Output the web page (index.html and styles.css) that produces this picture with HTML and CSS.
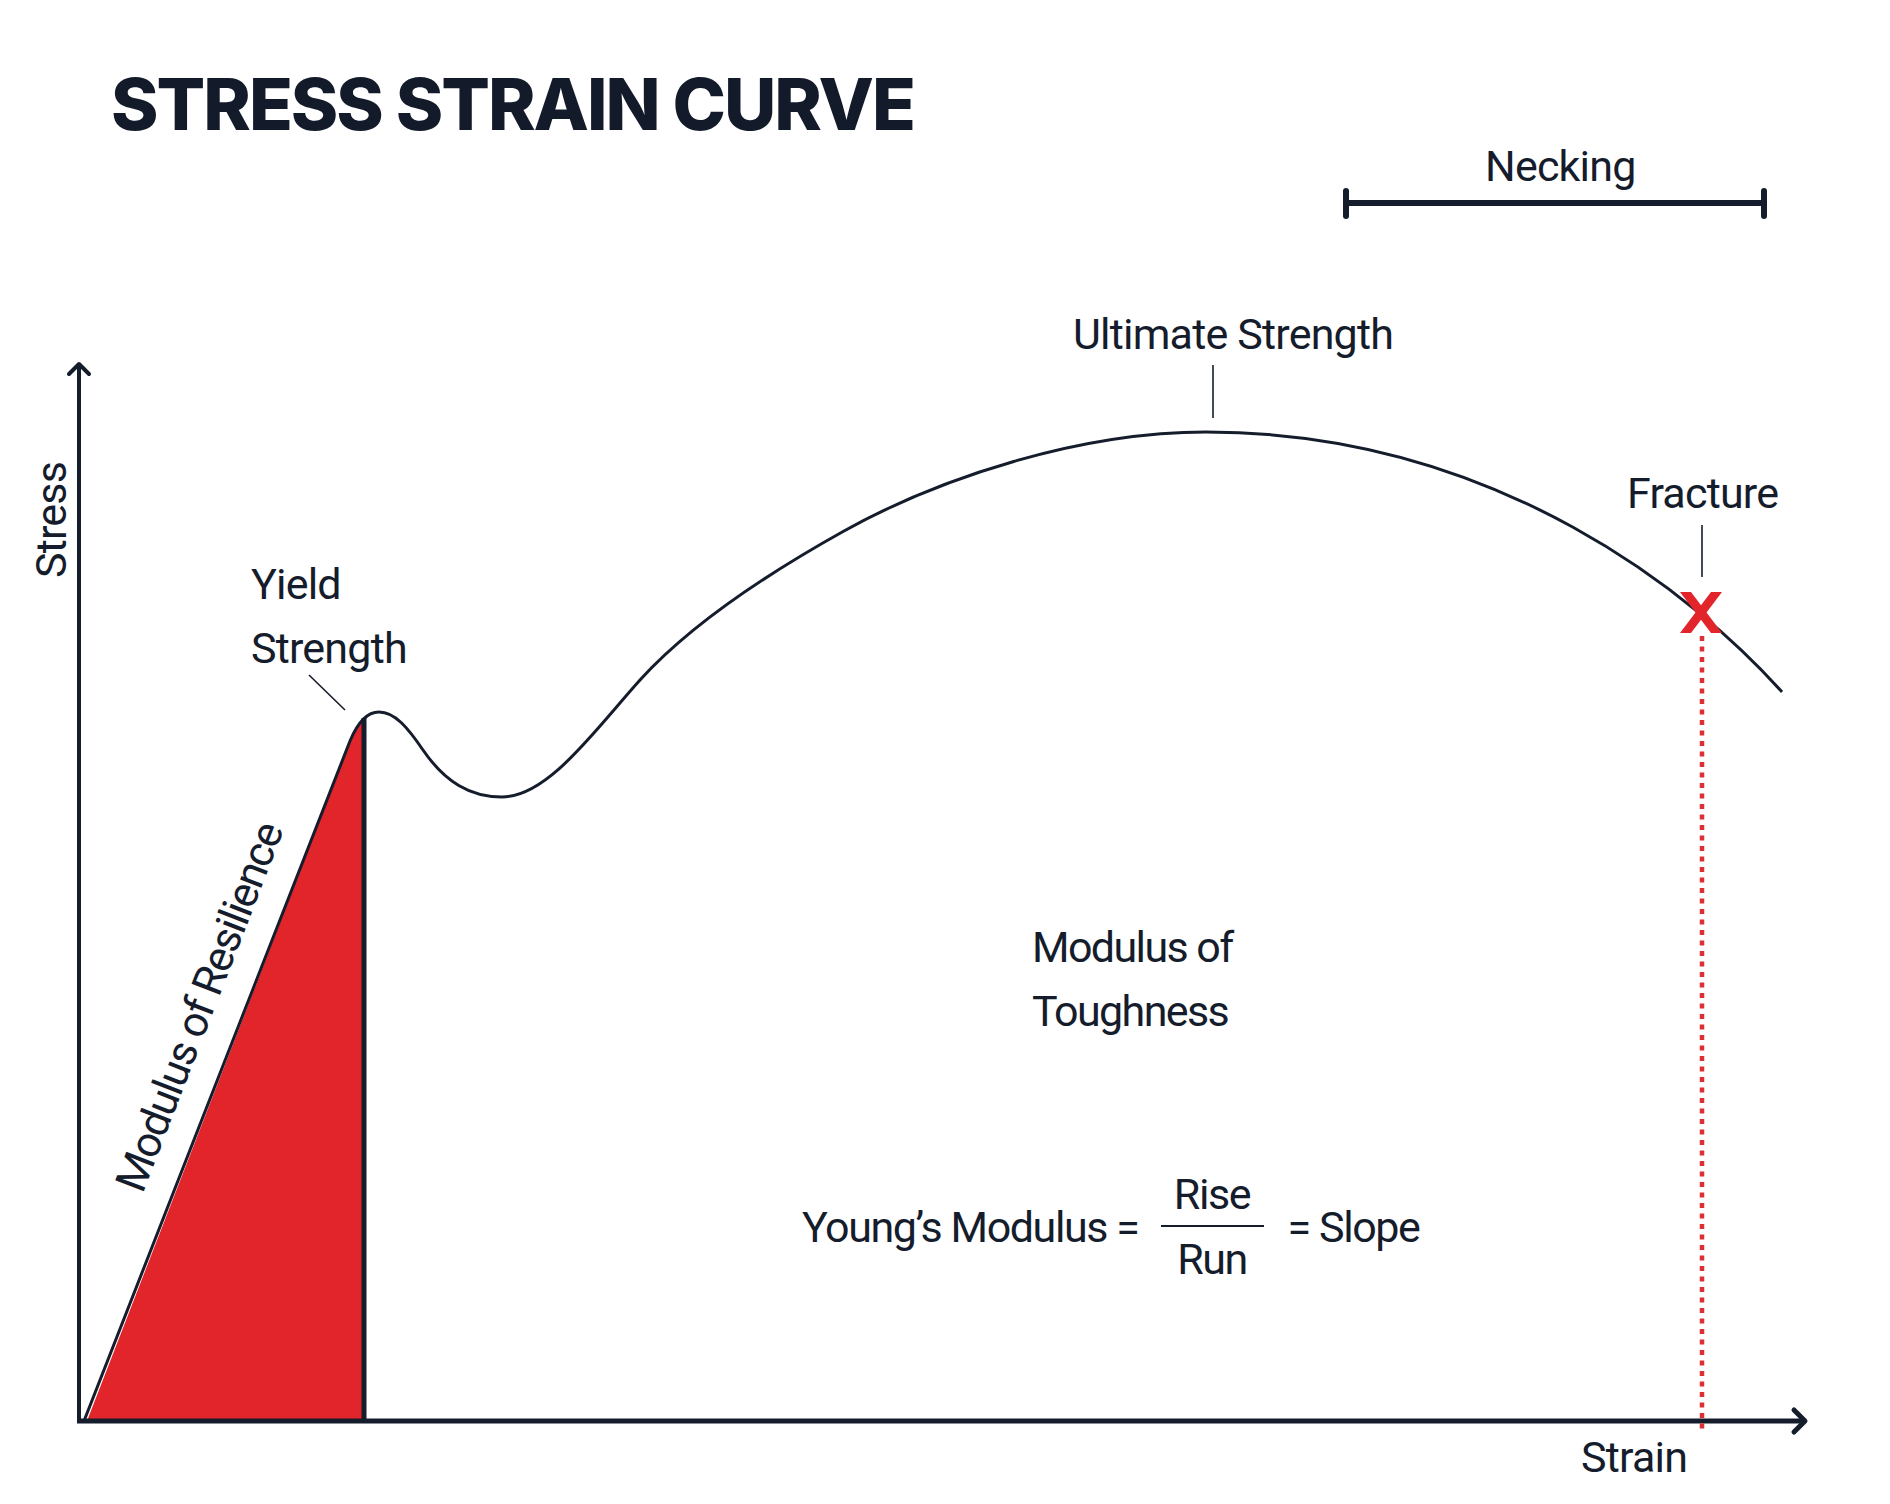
FILE: index.html
```html
<!DOCTYPE html>
<html lang="en">
<head>
<meta charset="utf-8">
<title>Stress Strain Curve</title>
<link rel="stylesheet" href="styles.css">
</head>
<body>
<header class="page-head">
  <h1 class="title">STRESS STRAIN CURVE</h1>
</header>
<main class="chart">
  <svg class="plot" width="1890" height="1364" viewBox="0 140 1890 1364" aria-hidden="true">
    <!-- necking bar -->
    <g class="ink-thick">
      <line x1="1346" y1="203" x2="1764" y2="203" stroke-width="6"/>
      <line x1="1346" y1="191" x2="1346" y2="216" stroke-width="6" stroke-linecap="round"/>
      <line x1="1764" y1="191" x2="1764" y2="216" stroke-width="6" stroke-linecap="round"/>
    </g>
    <!-- resilience area -->
    <path class="red-fill" d="M87 1421 L352 737 Q358 724 364 718 L364 1421 Z"/>
    <!-- axes -->
    <g class="ink-axis">
      <line x1="79" y1="364" x2="79" y2="1423" stroke-width="4"/>
      <polyline points="69,374 79,364 89,374" stroke-width="4"/>
      <line x1="77" y1="1421" x2="1805" y2="1421" stroke-width="5"/>
      <polyline points="1794,1410 1805,1421 1794,1432" stroke-width="5"/>
      <line x1="364" y1="718" x2="364" y2="1421" stroke-width="5"/>
    </g>
    <!-- curve -->
    <path class="curve" d="M84 1421 L350 741 C357 724 367 712 379 712 C395 712 408 728 423 750 C445 782 470 797 502 797 C548 797 595 730 640 680 C690 625 765 575 844 531 C940 477.5 1080 432 1206 432 C1500 432 1700 600 1782 692"/>
    <!-- leader lines -->
    <g class="leader">
      <line x1="309" y1="675" x2="345" y2="710"/>
      <line x1="1213" y1="365" x2="1213" y2="418"/>
      <line x1="1702" y1="525" x2="1702" y2="577"/>
    </g>
    <!-- fracture -->
    <line class="dots" x1="1702" y1="636" x2="1702" y2="1430"/>
    <g class="red-fill">
      <polygon points="1680,592 1691,592 1722,633 1711,633"/>
      <polygon points="1711,592 1722,592 1691,633 1680,633"/>
    </g>
  </svg>

  <div class="label necking">Necking</div>
  <div class="label ultimate">Ultimate Strength</div>
  <div class="label fracture">Fracture</div>
  <div class="label two-line yield">Yield<br>Strength</div>
  <div class="label two-line toughness">Modulus of<br>Toughness</div>
  <div class="label strain">Strain</div>
  <div class="label stress">Stress</div>
  <div class="label resilience">Modulus of Resilience</div>

  <div class="formula">
    <span class="label-text">Young’s Modulus =</span>
    <span class="fraction">
      <span class="label-text">Rise</span>
      <span class="bar"></span>
      <span class="label-text">Run</span>
    </span>
    <span class="label-text">= Slope</span>
  </div>
</main>
</body>
</html>
```

FILE: styles.css
```css
html, body {
  margin: 0;
  padding: 0;
  background: #ffffff;
}

body {
  width: 1890px;
  height: 1504px;
  overflow: hidden;
  color: #151c2c;
  font-family: Roboto, "Liberation Sans", sans-serif;
}

.page-head {
  height: 140px;
  box-sizing: border-box;
  padding: 68px 0 0 111px;
}

.title {
  margin: 0;
  font-family: Inter, "Liberation Sans", sans-serif;
  font-weight: 800;
  font-size: 72px;
  line-height: 72px;
  letter-spacing: -2px;
  color: #131a2a;
}

.chart {
  position: relative;
  width: 1890px;
  height: 1364px;
}

.plot {
  display: block;
}

.ink-thick line,
.ink-axis line,
.ink-axis polyline {
  stroke: #151c2c;
  fill: none;
}

.ink-axis polyline {
  stroke-linecap: round;
  stroke-linejoin: round;
}

.red-fill {
  fill: #e1252b;
}

.curve {
  fill: none;
  stroke: #151c2c;
  stroke-width: 3;
  stroke-linejoin: round;
}

.leader line {
  stroke: #151c2c;
  stroke-width: 1.6;
}

.dots {
  stroke: #d92f35;
  stroke-width: 4.5;
  stroke-dasharray: 5 5.5;
}

.label,
.label-text {
  font-family: Roboto, "Liberation Sans", sans-serif;
  font-weight: 400;
  font-size: 43px;
  line-height: 45px;
  letter-spacing: -0.8px;
  white-space: nowrap;
  color: #151c2c;
}

.label {
  position: absolute;
}

.two-line {
  line-height: 64px;
}

/* positions: top = baseline - 37 - 140 (chart offset) */
.necking { left: 1485px; top: 4px; }
.ultimate { left: 1073px; top: 172px; }
.fracture { left: 1627px; top: 331px; }
.yield { left: 251px; top: 412px; }
.toughness { left: 1032px; top: 775px; letter-spacing: -1.6px; }
.strain { left: 1581px; top: 1295px; }

.stress {
  left: 29px;
  top: 438px;
  transform-origin: left top;
  transform: rotate(-90deg);
}

.resilience {
  left: 108px;
  top: 1041px;
  letter-spacing: -1.5px;
  transform-origin: left top;
  transform: rotate(-68.8deg);
}

.formula {
  position: absolute;
  left: 802px;
  top: 1032px;
  display: flex;
  align-items: center;
}

.formula .label-text {
  letter-spacing: -1.4px;
}

.fraction {
  display: flex;
  flex-direction: column;
  align-items: center;
  width: 103px;
  margin: 0 24px 0 22px;
}

.bar {
  display: block;
  width: 103px;
  height: 2px;
  margin: 8px 0 10px;
  background: #151c2c;
}
```
